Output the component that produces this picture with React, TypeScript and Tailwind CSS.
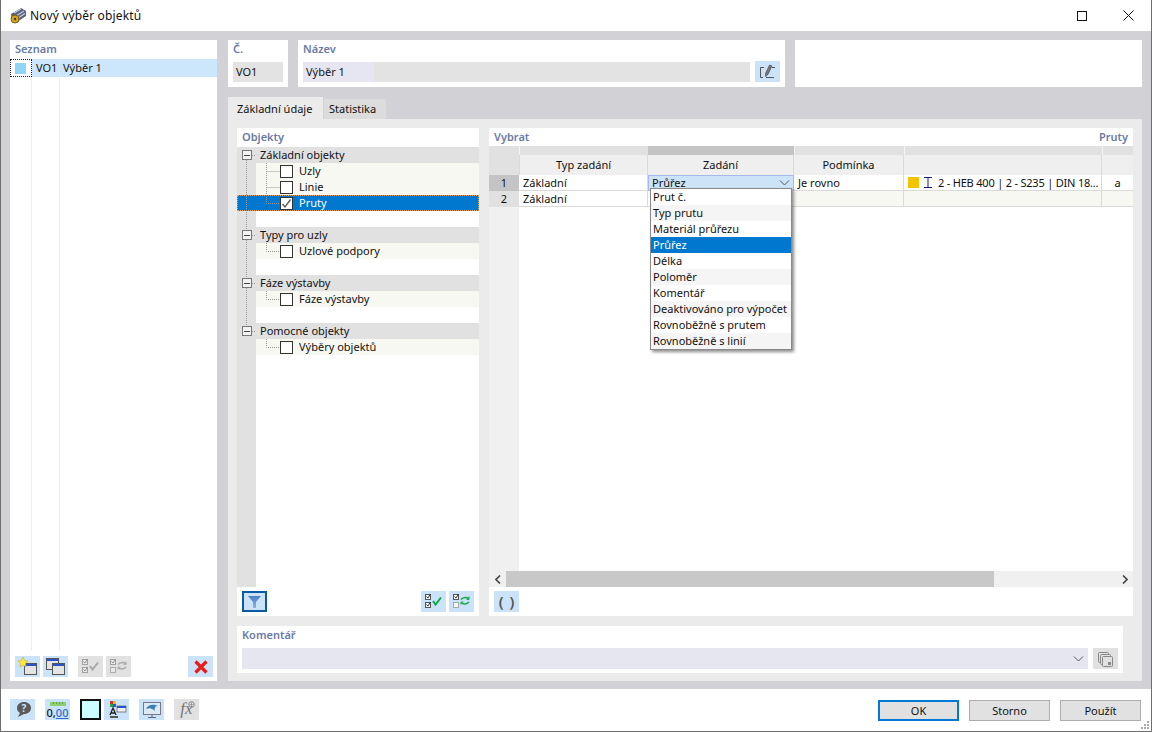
import React from "react";

const B = ({ c = "bg-[#cbe3f8]", w = "w-[25px]", h = "h-[21px]", children, extra = "" }: { c?: string; w?: string; h?: string; children?: React.ReactNode; extra?: string }) => (
  <div className={`${w} ${h} ${c} ${extra} flex items-center justify-center shrink-0`}>{children}</div>
);

const Head = ({ children }: { children: React.ReactNode }) => (
  <div className="h-[19px] px-[5px] leading-[18px] font-semibold text-[#6a7ba6]">{children}</div>
);

const Chevron = () => (
  <svg width="11" height="6" viewBox="0 0 11 6" fill="none" stroke="#555" strokeWidth="1"><path d="M1 .5 5.500 5 10 .5" /></svg>
);

const Box = ({ checked }: { checked?: boolean }) => (
  <div className="w-[13px] h-[13px] border border-[#333] bg-white shrink-0 flex items-center justify-center">
    {checked && <svg width="11" height="11" viewBox="0 0 11 11" fill="none" stroke="#555" strokeWidth="1.300"><path d="M1.500 6 4 9 9.500 1.500" /></svg>}
  </div>
);

const GroupRow = ({ t }: { t: string }) => (
  <div className="h-4 pl-[4px] flex items-center bg-[#e1e1e1] leading-4">{t}</div>
);

const ChildRow = ({ t, sel, checked }: { t: string; sel?: boolean; checked?: boolean }) => (
  <div className={sel ? "h-4 -ml-[19px] pl-[43px] flex items-center gap-[6px] bg-[#0078d0] text-white outline-1 -outline-offset-1 outline-dotted outline-[#e8a060]" : "h-4 pl-[24px] flex items-center gap-[6px] bg-[#f7f8f1]"}>
    <Box checked={checked} />
    <span>{t}</span>
  </div>
);

const CheckAll = ({ color, grey }: { color: string; grey?: boolean }) => {
  const s = grey ? "#a0a0a0" : "#555";
  const f = grey ? "#e8e8e8" : "#f2f6fa";
  const k = grey ? "#8a8a8a" : "#222";
  return (
    <svg width="19" height="15" viewBox="0 0 19 15" fill="none">
      <rect x="1.500" y=".5" width="5" height="5" stroke={s} fill={f} />
      <rect x="1.500" y="8.500" width="5" height="5" stroke={s} fill={f} />
      <path d="M2.500 2.500 4 4 6.500 0M2.500 10.500 4 12 6.500 8" stroke={k} strokeWidth=".9" />
      <path d="M9 7 11.500 10.500 17 3.500" stroke={color} strokeWidth="2" />
    </svg>
  );
};

const CheckSwap = ({ color, grey }: { color: string; grey?: boolean }) => {
  const s = grey ? "#a0a0a0" : "#555";
  const f = grey ? "#e8e8e8" : "#f2f6fa";
  const k = grey ? "#8a8a8a" : "#222";
  return (
    <svg width="19" height="15" viewBox="0 0 19 15" fill="none">
      <rect x="1.500" y=".5" width="5" height="5" stroke={s} fill={f} />
      <rect x="1.500" y="8.500" width="5" height="5" stroke="#aaa" fill={f} />
      <path d="M2.500 2.500 4 4 6.500 0" stroke={k} strokeWidth=".9" />
      <path d="M9 5.500C10.500 3.500 14 3 17 4.500M17 8C15 10.500 11 10.500 9 8.500" stroke={color} strokeWidth="1.500" />
      <path d="M17 2.500V5.500H14.500M9 10.500V8H11.500" stroke={color} strokeWidth=".9" />
    </svg>
  );
};

const WinIcon = ({ x = 0, y = 0 }: { x?: number; y?: number }) => (
  <g transform={`translate(${x} ${y})`}>
    <rect x=".5" y=".5" width="12" height="11" fill="#e4e4e4" stroke="#555" />
    <rect x="1" y="1" width="11" height="2" fill="#2a55c8" />
  </g>
);

const items = ["Prut č.", "Typ prutu", "Materiál průřezu", "Průřez", "Délka", "Poloměr", "Komentář", "Deaktivováno pro výpočet", "Rovnoběžně s prutem", "Rovnoběžně s linií"];

const TreeLines = () => (
  <svg className="absolute left-0 top-0 pointer-events-none" width="60" height="205" viewBox="0 0 60 205" fill="none" stroke="#9a9a9a" strokeDasharray="1 1">
    <path d="M9.500 13V180M15 8.500H19M15 88.500H19M15 136.500H19M15 184.500H19" />
    <path d="M29.500 16V56.500H43M29.500 24.500H43M29.500 40.500H43" />
    <path d="M29.500 96V104.500H43M29.500 144V152.500H43M29.500 192V200.500H43" />
  </svg>
);

const Minus = ({ top }: { top: number }) => (
  <div className="absolute left-[5px] w-[10px] h-[10px] border border-[#777] bg-[#f2f2f2] flex items-center justify-center" style={{ top }}>
    <div className="w-[6px] h-px bg-[#444]" />
  </div>
);

export default function App() {
  return (
    <div className="w-[1152px] h-[732px] flex flex-col bg-white border-x border-b border-[#6e6e6e] overflow-hidden text-[11px] leading-4 text-[#111]" style={{ fontFamily: '"Noto Sans", sans-serif' }}>
      {/* title */}
      <div className="h-[31px] flex items-center pl-[8px] shrink-0">
        <svg width="18" height="18" viewBox="0 0 18 18" className="mr-[3px]">
          <path d="M2 7 12 1 17 4 17 9 8 15 3 13Z" fill="#56617a" />
          <path d="M5 6 12 2M7 9 15 4M9 11 16 6.500" stroke="#c9d2e4" strokeWidth="1.200" />
          <circle cx="6" cy="12" r="4" fill="#d8a520" stroke="#7a5c10" />
          <circle cx="6" cy="12" r="1.200" fill="#3a3a3a" />
        </svg>
        <span className="text-[12px] tracking-[0.15px]">Nový výběr objektů</span>
        <div className="ml-auto flex items-center">
          <div className="w-[46px] flex justify-center"><div className="w-[10px] h-[10px] border border-[#111]" /></div>
          <div className="w-[46px] flex justify-center">
            <svg width="11" height="11" viewBox="0 0 11 11" stroke="#111" fill="none"><path d="M.5.500 10.500 10.500M10.500.500.500 10.500" /></svg>
          </div>
        </div>
      </div>

      {/* main */}
      <div className="h-[658px] shrink-0 bg-[#d2d1d6] pt-[9px] pb-[8px] pl-[9px] pr-[9px] flex gap-[11px]">
        {/* Seznam */}
        <div className="w-[207px] bg-white flex flex-col">
          <Head>Seznam</Head>
          <div className="flex-1 flex flex-col">
            <div className="h-[18px] flex bg-[#cce6fc]">
              <div className="w-[22px] bg-white border border-dotted border-[#222] flex items-center justify-center">
                <div className="w-[11px] h-[11px] bg-[#90d5f8] -ml-[2px]" />
              </div>
              <div className="w-[28px] pl-[4px] leading-[18px] border-r border-[#e6e6e6]">VO1</div>
              <div className="pl-[3px] leading-[18px]">Výběr 1</div>
            </div>
            <div className="flex-1 flex">
              <div className="w-[22px] border-r border-[#ececec]" />
              <div className="w-[28px] border-r border-[#ececec]" />
            </div>
          </div>
          <div className="h-[31px] pl-[5px] pt-[6px] flex">
            <B>
              <svg width="21" height="19" viewBox="0 0 21 19">
                <WinIcon x={7} y={6} />
                <path d="M6 0 7.500 3.500 11 4 8.500 6.500 9 10 6 8 3 10 3.500 6.500 1 4 4.500 3.500Z" fill="#ffe93a" stroke="#b9a020" strokeWidth=".5" />
              </svg>
            </B>
            <B extra="ml-[3px]">
              <svg width="21" height="19" viewBox="0 0 21 19"><WinIcon x={1} y={1} /><WinIcon x={7} y={6} /></svg>
            </B>
            <B c="bg-[#e1e1e1]" extra="ml-[10px]"><CheckAll color="#a8a8a8" grey /></B>
            <B c="bg-[#e1e1e1]" extra="ml-[3px]"><CheckSwap color="#a8a8a8" grey /></B>
            <B extra="ml-[57px]">
              <svg width="14" height="14" viewBox="0 0 14 14" stroke="#e81c1c" strokeWidth="3.200"><path d="M1.500 1.500 12.500 12.500M12.500 1.500 1.500 12.500" /></svg>
            </B>
          </div>
        </div>

        {/* right */}
        <div className="w-[914px] flex flex-col">
          <div className="h-[47px] flex gap-[10px] shrink-0">
            <div className="w-[60px] bg-white px-[5px]">
              <div className="h-[22px] leading-[18px] font-semibold text-[#6a7ba6]">Č.</div>
              <div className="h-5 bg-[#e3e3e3] px-[3px] leading-5">VO1</div>
            </div>
            <div className="w-[487px] bg-white px-[5px]">
              <div className="h-[22px] leading-[18px] font-semibold text-[#6a7ba6]">Název</div>
              <div className="flex gap-[5px]">
                <div className="w-[447px] h-5 bg-[#e3e3e3] flex">
                  <div className="w-[71px] bg-[#e6e6f2] px-[3px] leading-5">Výběr 1</div>
                </div>
                <B extra="-mt-px">
                  <svg width="17" height="15" viewBox="0 0 17 15" fill="none">
                    <path d="M5 3.500H1.500V13.500H4M7 13.500H15M13 3.500H16" stroke="#555" />
                    <path d="M10.500 1 13 2 9 10.500 6.500 12.500 6.500 9.500Z" fill="#777" stroke="#444" strokeWidth=".6" />
                  </svg>
                </B>
              </div>
            </div>
            <div className="flex-1 bg-white" />
          </div>

          <div className="mt-[10px] h-[22px] flex items-end shrink-0">
            <div className="h-[22px] w-[95px] bg-[#ebebeb] pl-[9px] leading-[24px]">Základní údaje</div>
            <div className="h-5 w-[62px] ml-px bg-[#dcdcdc] pl-[5px] leading-5">Statistika</div>
          </div>

          <div className="flex-1 bg-[#ebebeb] pt-[9px] pl-[9px] flex flex-col min-h-0">
            <div className="h-[488px] flex gap-[10px]">
              {/* Objekty */}
              <div className="w-[242px] bg-white flex flex-col">
                <Head>Objekty</Head>
                <div className="h-[440px] relative flex">
                  <div className="w-[19px] bg-[#e1e1e1]" />
                  <div className="flex-1 flex flex-col">
                    <GroupRow t="Základní objekty" />
                    <ChildRow t="Uzly" />
                    <ChildRow t="Linie" />
                    <ChildRow t="Pruty" sel checked />
                    <div className="h-4" />
                    <GroupRow t="Typy pro uzly" />
                    <ChildRow t="Uzlové podpory" />
                    <div className="h-4" />
                    <GroupRow t="Fáze výstavby" />
                    <ChildRow t="Fáze výstavby" />
                    <div className="h-4" />
                    <GroupRow t="Pomocné objekty" />
                    <ChildRow t="Výběry objektů" />
                  </div>
                  <TreeLines />
                  <Minus top={3} />
                  <Minus top={83} />
                  <Minus top={131} />
                  <Minus top={179} />
                </div>
                <div className="h-[29px] px-[5px] pt-[4px] flex">
                  <B extra="border-2 border-[#0a5aa8]">
                    <svg width="13" height="12" viewBox="0 0 13 12"><defs><linearGradient id="fg" x1="0" y1="0" x2="0" y2="1"><stop offset="0" stopColor="#4f7fc8" /><stop offset="1" stopColor="#8fb4e6" /></linearGradient></defs><path d="M0 0H13L8 6V12H5V6Z" fill="url(#fg)" /></svg>
                  </B>
                  <B extra="ml-auto"><CheckAll color="#12a84a" /></B>
                  <B extra="ml-[3px]"><CheckSwap color="#12a84a" /></B>
                </div>
              </div>

              {/* Vybrat */}
              <div className="w-[644px] bg-white flex flex-col">
                <div className="h-[18px] px-[5px] flex justify-between leading-[17px] font-semibold text-[#6a7ba6]">
                  <span>Vybrat</span><span>Pruty</span>
                </div>
                <div className="grid grid-cols-[30px_129px_146px_110px_198px_31px] grid-rows-[9px_20px_16px_16px] shrink-0">
                  <div className="bg-[#e1e1e1]" />
                  <div className="bg-[#e1e1e1] border-l border-[#f4f4f4]" />
                  <div className="bg-[#c4c4c4]" />
                  <div className="bg-[#e1e1e1] border-l border-[#f4f4f4]" />
                  <div className="bg-[#e1e1e1] border-l border-[#f4f4f4]" />
                  <div className="bg-[#e1e1e1] border-l border-[#f4f4f4]" />

                  <div className="bg-[#e1e1e1]" />
                  <div className="bg-[#efefef] text-center leading-5 border-x border-[#dadada]">Typ zadání</div>
                  <div className="bg-[#efefef] text-center leading-5 border-r border-[#dadada]">Zadání</div>
                  <div className="bg-[#efefef] text-center leading-5 border-r border-[#dadada]">Podmínka</div>
                  <div className="bg-[#efefef] border-r border-[#dadada]" />
                  <div className="bg-[#efefef]" />

                  <div className="bg-[#c4c4c4] text-center">1</div>
                  <div className="pl-[4px] border-b border-[#dadada] border-r">Základní</div>
                  <div className="relative bg-[#cce4f7] border border-[#a8b8ea] pl-[3px] flex items-center justify-between pr-[3px] leading-[14px]">
                    <span>Průřez</span>
                    <Chevron />
                    <div className="absolute z-10 left-px top-[12px] w-[142px] border border-[#8a8a8a] bg-white shadow-[2px_2px_3px_rgba(0,0,0,0.45)]">
                      {items.map((t, i) => (
                        <div key={t} className={`h-4 pl-[2px] leading-4 ${i === 3 ? "bg-[#0078d0] text-white" : i % 2 ? "bg-[#f5f5f5]" : "bg-white"}`}>{t}</div>
                      ))}
                    </div>
                  </div>
                  <div className="pl-[4px] border-b border-r border-[#dadada]">Je rovno</div>
                  <div className="pl-[4px] border-b border-r border-[#dadada] flex items-center overflow-hidden">
                    <div className="w-[11px] h-[11px] bg-[#f5c400] shrink-0" />
                    <svg width="10" height="11" viewBox="0 0 10 11" className="ml-[4px] mr-[5px] shrink-0" fill="none" stroke="#1a1a8a"><path d="M1 .5H9M1 10.500H9M5 .5V10.500" /></svg>
                    <span className="whitespace-nowrap tracking-[-0.2px]">2 - HEB 400 | 2 - S235 | DIN 18...</span>
                  </div>
                  <div className="text-center border-b border-[#dadada]">a</div>

                  <div className="bg-[#e1e1e1] text-center">2</div>
                  <div className="pl-[4px] border-b border-r border-[#dadada]">Základní</div>
                  <div className="border-b border-[#dadada]" />
                  <div className="bg-[#f7f8f1] border-b border-r border-[#dadada]" />
                  <div className="bg-[#f7f8f1] border-b border-r border-[#dadada]" />
                  <div className="bg-[#f7f8f1] border-b border-[#dadada]" />
                </div>
                <div className="flex-1 flex">
                  <div className="w-[30px] bg-[#f0f0f0]" />
                </div>
                <div className="h-4 bg-[#f0f0f0] flex items-center shrink-0">
                  <div className="w-[17px] flex justify-center">
                    <svg width="6" height="9" viewBox="0 0 6 9" fill="none" stroke="#444" strokeWidth="1.600"><path d="M5 .5 1 4.500 5 8.500" /></svg>
                  </div>
                  <div className="w-[488px] h-4 bg-[#c8c8c8]" />
                  <div className="flex-1 flex justify-end pr-[5px]">
                    <svg width="6" height="9" viewBox="0 0 6 9" fill="none" stroke="#444" strokeWidth="1.600"><path d="M1 .5 5 4.500 1 8.500" /></svg>
                  </div>
                </div>
                <div className="h-[29px] pl-[5px] pt-[4px] shrink-0">
                  <B><span className="text-[15px] font-semibold text-[#555] leading-none tracking-[6px] pl-[6px]">()</span></B>
                </div>
              </div>
            </div>

            <div className="mt-[10px] w-[886px] h-[47px] bg-white px-[5px]">
              <div className="h-[22px] leading-[18px] font-semibold text-[#6a7ba6]">Komentář</div>
              <div className="flex gap-[5px]">
                <div className="w-[846px] h-[21px] bg-[#e6e6f0] flex items-center justify-end pr-[4px]"><Chevron /></div>
                <B c="bg-[#e1e1e1]">
                  <svg width="17" height="16" viewBox="0 0 17 16" fill="#e1e1e1" stroke="#888">
                    <rect x="1.500" y="1.500" width="10" height="10" rx="1" />
                    <rect x="3.500" y="3.500" width="10" height="10" rx="1" />
                    <rect x="5.500" y="5.500" width="10" height="10" rx="1" />
                    <rect x="11" y="11" width="3" height="3" fill="#888" stroke="none" />
                  </svg>
                </B>
              </div>
            </div>
          </div>
        </div>
      </div>

      {/* footer */}
      <div className="flex-1 relative flex items-start pl-[9px] pt-[10px]">
        <B>
          <svg width="18" height="17" viewBox="0 0 18 17"><path d="M10 1C14 1 17 3.500 17 7 17 10.500 14 13 10 13L4 16 6 12C4 11 3 9 3 7 3 3.500 6 1 10 1Z" fill="#5a5a5a" /><text x="10" y="11" textAnchor="middle" fontSize="10" fontWeight="700" fill="#cbe3f8">?</text></svg>
        </B>
        <B extra="ml-[10px] flex-col">
          <svg width="16" height="4" viewBox="0 0 16 4" className="mb-[1px]"><rect width="16" height="4" fill="#8fce70" /><path d="M3.500 0V2M6.500 0V2M9.500 0V2M12.500 0V2" stroke="#4f8f3a" strokeWidth=".7" /></svg>
          <div className="text-[11px] leading-[11px] font-medium -mb-px">0,<span className="text-[#2a6ad0] underline">00</span></div>
        </B>
        <div className="ml-[10px] w-[21px] h-[21px] bg-[#ccffff] border-2 border-[#111]" />
        <B extra="ml-[3px]">
          <svg width="21" height="19" viewBox="0 0 21 19">
            <rect x="4" y="1" width="3" height="3" fill="#d03030" /><rect x="7" y="1" width="3" height="3" fill="#e0c020" />
            <rect x="4" y="4" width="3" height="3" fill="#30a040" /><rect x="7" y="4" width="3" height="3" fill="#3050d0" />
            <path d="M4 15 7 8 10 15M5 13H9" stroke="#222" strokeWidth="1.300" fill="none" />
            <rect x="4" y="16" width="8" height="2" fill="#555" />
            <rect x="11" y="6" width="9" height="6" fill="#eee" stroke="#555" strokeWidth=".7" /><rect x="11" y="6" width="9" height="2" fill="#2a55c8" />
          </svg>
        </B>
        <B extra="ml-[10px]">
          <svg width="20" height="18" viewBox="0 0 20 18" fill="none">
            <rect x="1.500" y="1.500" width="17" height="12" fill="#dceaf6" stroke="#778" />
            <path d="M4 8C6 3 12 3 16 5 13 5 12 7 13 10 11 8 8 6 4 8Z" fill="#3c7fb0" />
            <path d="M10 14V16M6 16.500H14" stroke="#667" />
          </svg>
        </B>
        <B c="bg-[#e1e1e1]" extra="ml-[10px] relative">
          <span className="text-[17px] italic text-[#777] leading-none -mt-[2px]" style={{ fontFamily: '"Liberation Serif", serif' }}>fx</span>
          <svg className="absolute right-[4px] top-[2px]" width="7" height="7" viewBox="0 0 7 7" fill="none" stroke="#888"><circle cx="3.500" cy="3.500" r="2.800" /><path d="M3.500 1.500V5.500M1.500 3.500H5.500" strokeWidth=".7" /></svg>
        </B>

        <div className="ml-auto flex gap-[10px] pr-[9px] pt-px -translate-x-px">
          <div className="w-[81px] h-[21px] bg-[#e1e1e1] border-2 border-[#0078d7] text-center leading-[17px]">OK</div>
          <div className="w-[81px] h-[21px] bg-[#e1e1e1] border border-[#adadad] text-center leading-[19px]">Storno</div>
          <div className="w-[81px] h-[21px] bg-[#e1e1e1] border border-[#adadad] text-center leading-[19px]">Použít</div>
        </div>
        <svg className="absolute right-[1px] bottom-[1px]" width="9" height="9" viewBox="0 0 9 9" fill="#aaa">
          <rect x="6" y="0" width="2" height="2" /><rect x="3" y="3" width="2" height="2" /><rect x="6" y="3" width="2" height="2" />
          <rect x="0" y="6" width="2" height="2" /><rect x="3" y="6" width="2" height="2" /><rect x="6" y="6" width="2" height="2" />
        </svg>
      </div>
    </div>
  );
}
